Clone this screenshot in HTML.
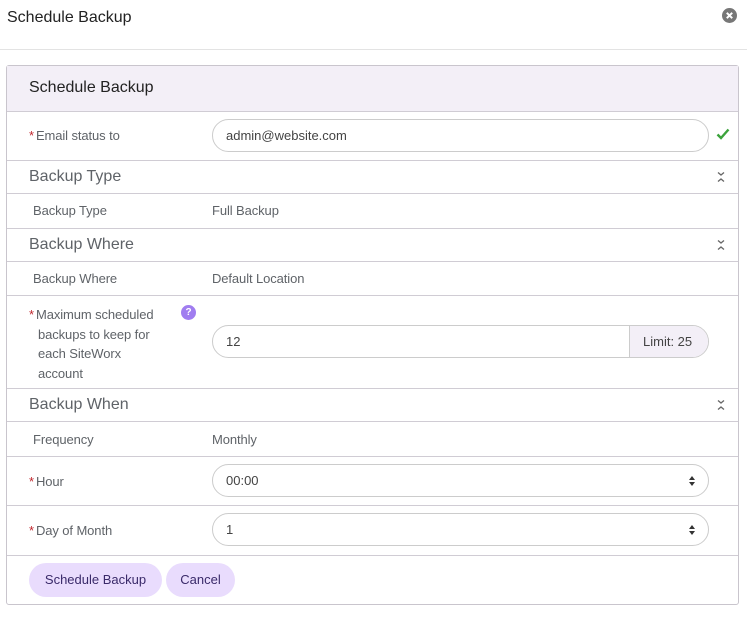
<!DOCTYPE html>
<html><head><style>
*{box-sizing:border-box;margin:0;padding:0}
body{width:747px;height:625px;background:#fff;font-family:"Liberation Sans",sans-serif;position:relative;overflow:hidden;color:#555}
.a{position:absolute}
.line{position:absolute;left:7px;width:731px;height:1px;background:#d0ccd4}
.lbl{position:absolute;left:33px;font-size:13px;color:#5f6368;letter-spacing:-0.1px}
.rl{left:29px}
.star{color:#c0262d;margin-right:2px}
.sec{position:absolute;left:29px;font-size:16px;color:#5f6368}
.inp{position:absolute;left:212px;width:497px;height:33px;border:1px solid #ccc;border-radius:17px;font-size:13px;color:#444;padding-left:13px;line-height:31px;background:#fff}
.chev{position:absolute;left:716px;width:10px;height:12px}
.btn{position:absolute;top:563px;height:34px;border-radius:17px;background:#e9dcfd;color:#3a2a6a;font-size:13px;line-height:34px;text-align:center}
</style></head><body>
<div class="a" style="left:7px;top:9px;font-size:16px;color:#222">Schedule Backup</div>
<svg class="a" style="left:722px;top:8px" width="15" height="15" viewBox="0 0 15 15"><circle cx="7.5" cy="7.5" r="7.5" fill="#777"/><path d="M4.8 4.8L10.2 10.2M10.2 4.8L4.8 10.2" stroke="#fff" stroke-width="2"/></svg>
<div class="a" style="left:0;top:49px;width:747px;height:1px;background:#e3e3e3"></div>
<div class="a" style="left:6px;top:65px;width:733px;height:540px;border:1px solid #c9c5cd;border-radius:3px"></div>
<div class="a" style="left:7px;top:66px;width:731px;height:45px;background:#f3eff7"></div>
<div class="a" style="left:29px;top:79px;font-size:16px;color:#222">Schedule Backup</div>
<div class="line" style="top:111px"></div>
<div class="lbl rl" style="top:128px"><span class="star">*</span>Email status to</div>
<div class="inp" style="top:119px">admin@website.com</div>
<svg class="a" style="left:716px;top:128px" width="14" height="12" viewBox="0 0 14 12"><path d="M1.5 6.5L5 10L12.5 1.5" stroke="#3ca33c" stroke-width="2.4" fill="none"/></svg>
<div class="line" style="top:160px"></div>
<div class="sec" style="top:168px">Backup Type</div>
<svg class="chev" style="top:171px" viewBox="0 0 10 12"><path d="M2 1.5L5 4L8 1.5M2 10.5L5 8L8 10.5" stroke="#666" stroke-width="1.3" fill="none"/></svg>
<div class="line" style="top:193px"></div>
<div class="lbl" style="top:203px">Backup Type</div>
<div class="lbl" style="left:212px;top:203px">Full Backup</div>
<div class="line" style="top:228px"></div>
<div class="sec" style="top:236px">Backup Where</div>
<svg class="chev" style="top:239px" viewBox="0 0 10 12"><path d="M2 1.5L5 4L8 1.5M2 10.5L5 8L8 10.5" stroke="#666" stroke-width="1.3" fill="none"/></svg>
<div class="line" style="top:261px"></div>
<div class="lbl" style="top:271px">Backup Where</div>
<div class="lbl" style="left:212px;top:271px">Default Location</div>
<div class="line" style="top:295px"></div>
<div class="lbl rl" style="top:305px;line-height:19.5px;width:140px">
<span class="star">*</span>Maximum scheduled<br><span style="padding-left:9px">backups to keep for</span><br><span style="padding-left:9px">each SiteWorx</span><br><span style="padding-left:9px">account</span></div>
<div class="a" style="left:181px;top:305px;width:15px;height:15px;border-radius:50%;background:#a07df0;color:#fff;font-size:10px;font-weight:bold;line-height:15px;text-align:center">?</div>
<div class="inp" style="top:325px">12</div>
<div class="a" style="left:629px;top:326px;width:79px;height:31px;background:#f3eff7;border-left:1px solid #ccc;border-radius:0 16px 16px 0;font-size:13px;color:#444;line-height:31px;padding-left:13px">Limit: 25</div>
<div class="line" style="top:388px"></div>
<div class="sec" style="top:396px">Backup When</div>
<svg class="chev" style="top:399px" viewBox="0 0 10 12"><path d="M2 1.5L5 4L8 1.5M2 10.5L5 8L8 10.5" stroke="#666" stroke-width="1.3" fill="none"/></svg>
<div class="line" style="top:421px"></div>
<div class="lbl" style="top:432px">Frequency</div>
<div class="lbl" style="left:212px;top:432px">Monthly</div>
<div class="line" style="top:456px"></div>
<div class="lbl rl" style="top:474px"><span class="star">*</span>Hour</div>
<div class="inp" style="top:464px">00:00<svg class="a" style="right:13px;top:11px" width="6" height="10" viewBox="0 0 6 10"><path d="M0 4L3 0L6 4ZM0 6L3 10L6 6Z" fill="#333"/></svg></div>
<div class="line" style="top:505px"></div>
<div class="lbl rl" style="top:523px"><span class="star">*</span>Day of Month</div>
<div class="inp" style="top:513px">1<svg class="a" style="right:13px;top:11px" width="6" height="10" viewBox="0 0 6 10"><path d="M0 4L3 0L6 4ZM0 6L3 10L6 6Z" fill="#333"/></svg></div>
<div class="line" style="top:555px"></div>
<div class="btn" style="left:29px;width:133px">Schedule Backup</div>
<div class="btn" style="left:166px;width:69px">Cancel</div>
</body></html>
